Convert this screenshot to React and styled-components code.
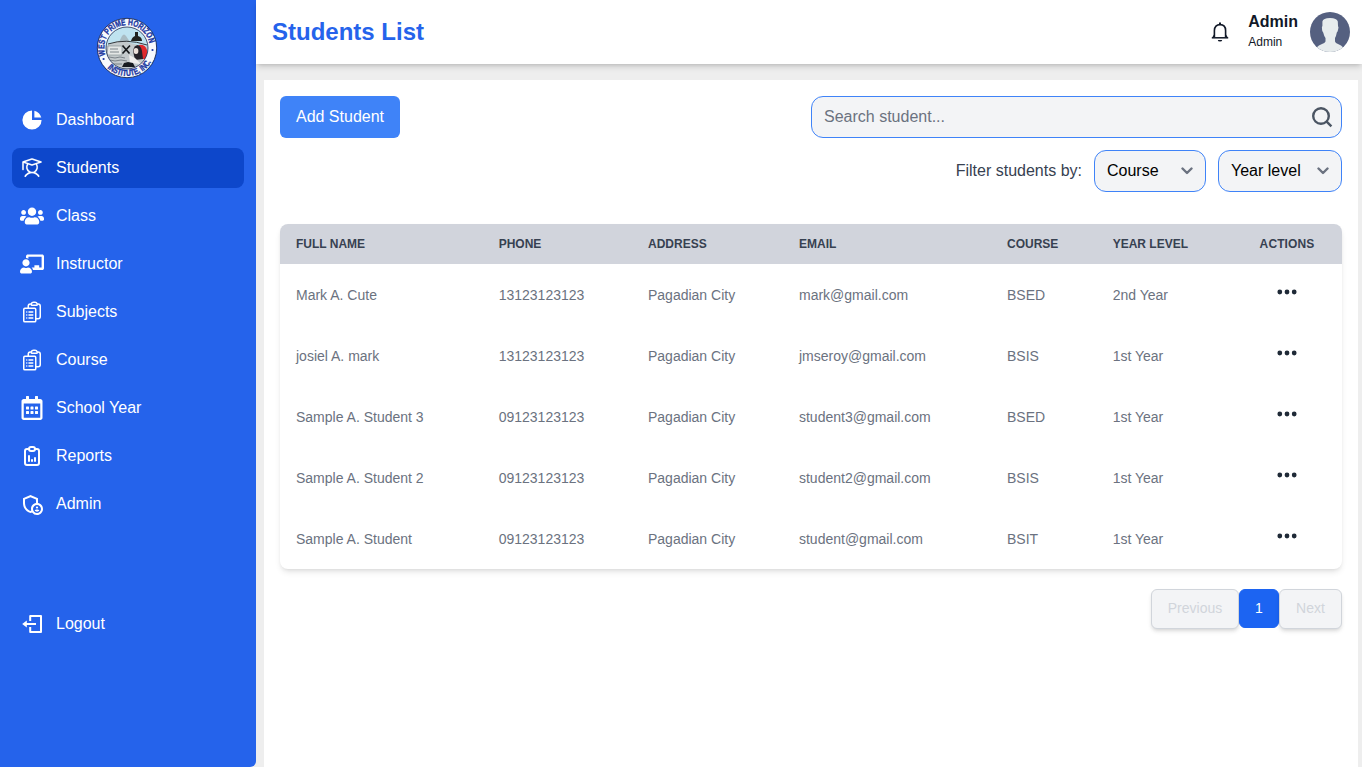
import React from "react";
import styled, { createGlobalStyle } from "styled-components";
import { HiChartPie, HiDotsHorizontal } from "react-icons/hi";
import { HiOutlineClipboardDocumentList } from "react-icons/hi2";
import { PiStudent } from "react-icons/pi";
import { FaUsers, FaChalkboardTeacher, FaRegCalendarAlt } from "react-icons/fa";
import { TbReportAnalytics } from "react-icons/tb";
import { MdOutlineAdminPanelSettings } from "react-icons/md";

const GlobalStyle = createGlobalStyle`
  *, *::before, *::after { box-sizing: border-box; }
  body {
    margin: 0;
    background: #eeeeee;
    font-family: "Liberation Sans", Arial, sans-serif;
    font-size: 16px;
    line-height: 24px;
    overflow: hidden;
  }
`;

const Page = styled.div`
  display: flex;
  height: 100vh;
`;

const Sidebar = styled.aside`
  width: 256px;
  flex-shrink: 0;
  background: #2563eb;
  color: #fff;
  padding: 16px 12px;
  border-bottom-right-radius: 6px;
`;

const LogoWrap = styled.div`
  display: flex;
  justify-content: center;
  height: 64px;
  margin-bottom: 20px;
  padding-right: 2px;
`;

const NavList = styled.nav`
  display: flex;
  flex-direction: column;
  gap: 8px;
`;

const NavItem = styled.a`
  display: flex;
  align-items: center;
  gap: 12px;
  height: 40px;
  padding: 0 8px;
  margin-top: ${(p) => (p.$spaced ? "72px" : "0")};
  border-radius: 8px;
  background: ${(p) => (p.$active ? "#0d47cb" : "transparent")};
  svg { flex-shrink: 0; }
`;

const StudentIcon = styled(PiStudent)`
  stroke-width: 1px;
`;

const ClipboardIcon = styled(HiOutlineClipboardDocumentList)`
  stroke-width: 1.5px;
`;

const Main = styled.div`
  flex: 1;
  min-width: 0;
  display: flex;
  flex-direction: column;
`;

const Header = styled.header`
  display: flex;
  align-items: center;
  height: 64px;
  flex-shrink: 0;
  background: #fff;
  padding: 0 12px 0 16px;
  box-shadow: 0 4px 6px -1px rgba(0, 0, 0, 0.14), 0 2px 4px -2px rgba(0, 0, 0, 0.14);
`;

const Title = styled.h1`
  margin: 0 auto 0 0;
  color: #2563eb;
  font-size: 24px;
  line-height: 32px;
  font-weight: 700;
`;

const UserInfo = styled.div`
  color: #111827;
  margin: 0 12px 0 16px;
`;

const UserName = styled.div`
  font-size: 16px;
  line-height: 20px;
  font-weight: 700;
`;

const UserRole = styled.div`
  font-size: 12px;
  line-height: 20px;
`;

const Panel = styled.main`
  flex: 1;
  margin: 16px 4px 0 8px;
  padding: 16px;
  background: #fff;
`;

const Toolbar = styled.div`
  display: flex;
  justify-content: space-between;
  align-items: flex-start;
`;

const AddButton = styled.button`
  width: 120px;
  height: 42px;
  padding: 0;
  border: 0;
  border-radius: 6px;
  background: #3f83f8;
  color: #fff;
  font: inherit;
`;

const Tools = styled.div`
  display: flex;
  flex-direction: column;
  gap: 12px;
`;

const SearchBox = styled.div`
  display: flex;
  align-items: center;
  justify-content: space-between;
  width: 531px;
  height: 42px;
  padding: 0 7px 0 12px;
  border: 1px solid #3f83f8;
  border-radius: 12px;
  background: #f3f4f6;
  color: #6b7280;
  svg { color: #4b5563; }
`;

const Filters = styled.div`
  display: flex;
  align-items: center;
  justify-content: flex-end;
  gap: 12px;
  color: #374151;
`;

const Select = styled.div`
  display: flex;
  align-items: center;
  justify-content: space-between;
  width: ${(p) => p.$width}px;
  height: 42px;
  padding: 0 12px;
  border: 1px solid #3f83f8;
  border-radius: 12px;
  background: #f3f4f6;
  color: #000;
`;

const TableCard = styled.div`
  margin-top: 32px;
  border-radius: 8px;
  overflow: hidden;
  box-shadow: 0 4px 6px -1px rgba(0, 0, 0, 0.1), 0 2px 4px -2px rgba(0, 0, 0, 0.1);
`;

const Row = styled.div`
  display: grid;
  grid-template-columns: 202.7px 149.3px 151px 208px 105.7px 135.3px 110px;
  align-items: center;
  height: 61px;
  color: #6b7280;
  font-size: 14px;
`;

const HeadRow = styled(Row)`
  height: 40px;
  background: #d1d4dc;
  color: #374151;
  font-size: 12px;
  font-weight: 700;
`;

const Cell = styled.div`
  padding-left: 16px;
  white-space: nowrap;
`;

const ActionHead = styled.div`
  text-align: center;
  letter-spacing: 0.1px;
`;

const ActionCell = styled.div`
  display: flex;
  justify-content: center;
  color: #1f2a37;
  svg { margin-bottom: 6px; }
`;

const Pagination = styled.div`
  display: flex;
  justify-content: flex-end;
  margin-top: 20px;
`;

const PageButton = styled.button`
  width: ${(p) => p.$width}px;
  height: ${(p) => (p.$current ? 39 : 40)}px;
  padding: 0 0 2px;
  border: 1px solid ${(p) => (p.$current ? "#1c64f2" : "#d1d5db")};
  border-radius: 6px;
  background: ${(p) => (p.$current ? "#1c64f2" : "#f3f4f6")};
  color: ${(p) => (p.$current ? "#fff" : "#d1d5db")};
  font-family: inherit;
  font-size: 14px;
  box-shadow: ${(p) => (p.$current ? "none" : "0 3px 5px -1px rgba(0,0,0,.12), 0 2px 4px -2px rgba(0,0,0,.12)")};
`;

const SealText = styled.text`
  font-family: "Liberation Sans", Arial, sans-serif;
  font-weight: 700;
  font-size: 8.8px;
  fill: #1a36a0;
  stroke: #1a36a0;
  stroke-width: 0.35px;
`;

function Logo() {
  return (
    <svg width="62" height="64" viewBox="0 0 62 64">
      <defs>
        <path id="sealTop" d="M9.4 39.2 A22.8 22.8 0 1 1 53.8 31" />
        <path id="sealBottom" d="M10 50.6 A28 28 0 0 0 57.5 41" />
        <clipPath id="sealInner"><circle cx="31" cy="32" r="21" /></clipPath>
      </defs>
      <circle cx="31" cy="32" r="29.7" fill="#f7f9fd" stroke="#16264f" strokeWidth=".9" />
      <g clipPath="url(#sealInner)">
        <rect x="8" y="8" width="46" height="48" fill="#bfe3f0" />
        <path d="M8 31 Q22 23 31 26 T54 31 V56 H8Z" fill="#c4cacc" />
        <path d="M23 26 L26 20 Q28 17 30 20 L34 26Z" fill="#a9bcc3" />
        <path d="M12 30 h14 v9 h-15z" fill="#e4e7e6" stroke="#7b868c" strokeWidth=".6" />
        <path d="M14 33h8M14 36h9M13 41l6 1 5-1 5 1M14 44l5 1 6-1 6 1M16 48h10" stroke="#737b81" fill="none" strokeWidth=".9" />
        <path d="M12 28 Q30 22 51 29" fill="none" stroke="#35383c" strokeWidth="1" />
        <path d="M35 25 q1-4 4-5 v-4 h3 v4 q4 1 4 5z" fill="#22221e" />
        <path d="M26.5 29.5 l7 8 M34 29.5 l-7.5 8" stroke="#15181b" strokeWidth="1.7" />
        <path d="M43 29 q6-1 8 5 q1 6-2 9 h-6z" fill="#e0292c" />
        <path d="M37 35 q1-6 5-6 q3 1 4 6 l1 8 -8 1z" fill="#262228" />
        <ellipse cx="40" cy="35" rx="2.4" ry="3" fill="#ece0d9" />
        <path d="M33 39 l6 3 6 6 -11-1z" fill="#f0eeec" />
        <path d="M26 51 l2-4 4-1 5 1 2 4z" fill="#171b20" />
      </g>
      <circle cx="31" cy="32" r="21" fill="none" stroke="#1a2a50" strokeWidth=".8" />
      <circle cx="7.6" cy="43" r="1.1" fill="#1a36a0" />
      <circle cx="56.5" cy="34" r="1.1" fill="#1a36a0" />
      <SealText><textPath href="#sealTop" textLength="74" lengthAdjust="spacingAndGlyphs">WEST PRIME HORIZON</textPath></SealText>
      <SealText><textPath href="#sealBottom" startOffset="2" textLength="51" lengthAdjust="spacingAndGlyphs">INSTITUTE, INC.</textPath></SealText>
    </svg>
  );
}

function Avatar() {
  return (
    <svg width="40" height="40" viewBox="0 0 40 40">
      <defs><clipPath id="avatarClip"><circle cx="20" cy="20" r="20" /></clipPath></defs>
      <g clipPath="url(#avatarClip)">
        <rect width="40" height="40" fill="#556080" />
        <path d="M12.4 9.5 Q13 6 20 6 Q27 6 27.8 9.5 L28 14 Q29 15 28 18 Q27.5 20 26.8 20.5 Q26 25 25 26 V29.5 Q25.5 31 28 32 Q31.5 33.3 33 35.3 L32 40 H8 L6.8 35.3 Q8.5 33.3 12 32 Q14.8 31 15.5 29.5 V26 Q14 24 13.2 20.5 Q12 19.5 12 17 Q11.6 15 12.4 14Z" fill="#e7eced" />
      </g>
    </svg>
  );
}

function BellIcon() {
  return (
    <svg width="24" height="24" viewBox="0 0 24 24" fill="none" stroke="#111827">
      <path d="M6.4 17V10.6C6.4 6.8 8.7 4.6 12 4.6S17.6 6.8 17.6 10.6V17" strokeWidth="1.6" />
      <path d="M12 2.4V4.6" strokeWidth="2" />
      <path d="M3.8 17.8H20.2" strokeWidth="1.5" />
      <path d="M6.4 15.2L4.8 17.6M17.6 15.2L19.2 17.6" strokeWidth="1.3" />
      <path d="M9.8 20H14.2A2.2 1.6 0 0 1 9.8 20Z" fill="#111827" stroke="none" />
    </svg>
  );
}

function SearchIcon() {
  return (
    <svg width="24" height="24" viewBox="0 0 24 24" fill="none" stroke="currentColor" strokeWidth="2.4">
      <circle cx="11" cy="11" r="7.8" />
      <path d="M16.4 16.4L21.4 21.4" />
    </svg>
  );
}

function LogoutIcon() {
  return (
    <svg width="24" height="24" viewBox="0 0 24 24" fill="none">
      <path d="M10.2 9V4H21V20H10.2V15" stroke="currentColor" strokeWidth="2" strokeLinejoin="round" />
      <path d="M6 12H16" stroke="currentColor" strokeWidth="2" />
      <path d="M2.2 12L6.8 8.6V15.4Z" fill="currentColor" />
    </svg>
  );
}

function Chevron() {
  return (
    <svg width="12" height="8" viewBox="0 0 12 8" fill="none" stroke="#6b7280" strokeWidth="2.4" strokeLinecap="round" strokeLinejoin="round">
      <path d="M1.5 1.5L6 6L10.5 1.5" />
    </svg>
  );
}

const nav = [
  ["Dashboard", HiChartPie],
  ["Students", StudentIcon],
  ["Class", FaUsers],
  ["Instructor", FaChalkboardTeacher],
  ["Subjects", ClipboardIcon],
  ["Course", ClipboardIcon],
  ["School Year", FaRegCalendarAlt],
  ["Reports", TbReportAnalytics],
  ["Admin", MdOutlineAdminPanelSettings],
  ["Logout", LogoutIcon],
];

const columns = ["FULL NAME", "PHONE", "ADDRESS", "EMAIL", "COURSE", "YEAR LEVEL"];

const students = [
  ["Mark A. Cute", "13123123123", "Pagadian City", "mark@gmail.com", "BSED", "2nd Year"],
  ["josiel A. mark", "13123123123", "Pagadian City", "jmseroy@gmail.com", "BSIS", "1st Year"],
  ["Sample A. Student 3", "09123123123", "Pagadian City", "student3@gmail.com", "BSED", "1st Year"],
  ["Sample A. Student 2", "09123123123", "Pagadian City", "student2@gmail.com", "BSIS", "1st Year"],
  ["Sample A. Student", "09123123123", "Pagadian City", "student@gmail.com", "BSIT", "1st Year"],
];

export default function App() {
  return (
    <>
      <GlobalStyle />
      <Page>
        <Sidebar>
          <LogoWrap><Logo /></LogoWrap>
          <NavList>
            {nav.map(([label, Icon]) => (
              <NavItem key={label} $active={label === "Students"} $spaced={label === "Logout"}>
                <Icon size={24} />
                <span>{label}</span>
              </NavItem>
            ))}
          </NavList>
        </Sidebar>
        <Main>
          <Header>
            <Title>Students List</Title>
            <BellIcon />
            <UserInfo>
              <UserName>Admin</UserName>
              <UserRole>Admin</UserRole>
            </UserInfo>
            <Avatar />
          </Header>
          <Panel>
            <Toolbar>
              <AddButton>Add Student</AddButton>
              <Tools>
                <SearchBox><span>Search student...</span><SearchIcon /></SearchBox>
                <Filters>
                  <span>Filter students by:</span>
                  <Select $width={112}><span>Course</span><Chevron /></Select>
                  <Select $width={124}><span>Year level</span><Chevron /></Select>
                </Filters>
              </Tools>
            </Toolbar>
            <TableCard>
              <HeadRow>
                {columns.map((c) => <Cell key={c}>{c}</Cell>)}
                <ActionHead>ACTIONS</ActionHead>
              </HeadRow>
              {students.map((s) => (
                <Row key={s[0]}>
                  {s.map((v, i) => <Cell key={i}>{v}</Cell>)}
                  <ActionCell><HiDotsHorizontal size={24} /></ActionCell>
                </Row>
              ))}
            </TableCard>
            <Pagination>
              <PageButton $width={88}>Previous</PageButton>
              <PageButton $width={40} $current>1</PageButton>
              <PageButton $width={63}>Next</PageButton>
            </Pagination>
          </Panel>
        </Main>
      </Page>
    </>
  );
}
